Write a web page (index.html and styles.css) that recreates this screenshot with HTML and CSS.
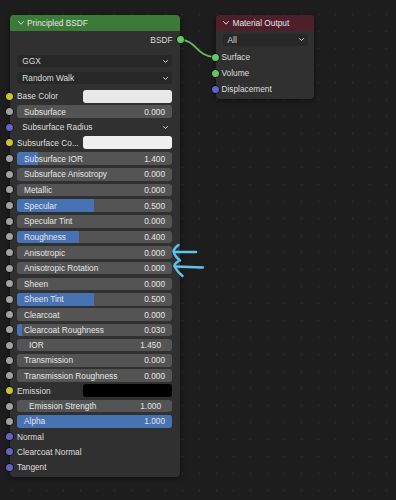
FILE: index.html
```html
<!DOCTYPE html>
<html lang="en">

<head>
  <meta charset="UTF-8" />
  <meta name="viewport" content="width=device-width, initial-scale=1" />
  <title>Node Editor</title>
  <link rel="stylesheet" href="styles.css">
</head>

<body>
  <div class="editor">
    <svg class="wires" width="396" height="500" viewBox="0 0 396 500">
      <path d="M179 39.5 C 197 39.5, 196 56.8, 214.3 56.8" />
    </svg>

    <!-- Principled BSDF -->
    <div class="node node-principled">
      <div class="node-header header-shader">
        <svg class="chevron" width="6" height="4" viewBox="0 0 6 4"><polyline points="0.5,0.5 3,3.2 5.5,0.5" /></svg>
        <span>Principled BSDF</span>
      </div>

      <div class="node-body">
        <div class="row row-output">
          <span class="label">BSDF</span>
          <span class="socket socket-out shader"></span>
        </div>

        <div class="top-menus">
          <div class="row row-menu">
            <div class="dropdown"><span>GGX</span><svg class="menu-arrow" width="5" height="3" viewBox="0 0 5 3"><polyline points="0.5,0.5 2.5,2.5 4.5,0.5" /></svg></div>
          </div>
          <div class="row row-menu">
            <div class="dropdown"><span>Random Walk</span><svg class="menu-arrow" width="5" height="3" viewBox="0 0 5 3"><polyline points="0.5,0.5 2.5,2.5 4.5,0.5" /></svg></div>
          </div>
        </div>

        <div class="group group-a">
          <div class="row">
            <span class="socket color"></span>
            <span class="label label-fixed">Base Color</span>
            <div class="swatch swatch-white"></div>
          </div>
          <div class="row">
            <span class="socket value"></span>
            <div class="field"><span>Subsurface</span><span>0.000</span></div>
          </div>
          <div class="row">
            <span class="socket vector"></span>
            <div class="dropdown plain"><span>Subsurface Radius</span><svg class="menu-arrow" width="5" height="3" viewBox="0 0 5 3"><polyline points="0.5,0.5 2.5,2.5 4.5,0.5" /></svg></div>
          </div>
          <div class="row">
            <span class="socket color"></span>
            <span class="label label-fixed">Subsurface Co...</span>
            <div class="swatch swatch-light"></div>
          </div>
          <div class="row">
            <span class="socket value"></span>
            <div class="field"><span class="fill" style="width: 13.7%"></span><span>Subsurface IOR</span><span>1.400</span></div>
          </div>
          <div class="row">
            <span class="socket value"></span>
            <div class="field"><span>Subsurface Anisotropy</span><span>0.000</span></div>
          </div>
          <div class="row">
            <span class="socket value"></span>
            <div class="field"><span>Metallic</span><span>0.000</span></div>
          </div>
          <div class="row">
            <span class="socket value"></span>
            <div class="field"><span class="fill" style="width: 49.5%"></span><span>Specular</span><span>0.500</span></div>
          </div>
          <div class="row">
            <span class="socket value"></span>
            <div class="field"><span>Specular Tint</span><span>0.000</span></div>
          </div>
          <div class="row">
            <span class="socket value"></span>
            <div class="field"><span class="fill" style="width: 40%"></span><span>Roughness</span><span>0.400</span></div>
          </div>
          <div class="row">
            <span class="socket value"></span>
            <div class="field"><span>Anisotropic</span><span>0.000</span></div>
          </div>
          <div class="row">
            <span class="socket value"></span>
            <div class="field"><span>Anisotropic Rotation</span><span>0.000</span></div>
          </div>
          <div class="row">
            <span class="socket value"></span>
            <div class="field"><span>Sheen</span><span>0.000</span></div>
          </div>
        </div>

        <div class="group group-b">
          <div class="row">
            <span class="socket value"></span>
            <div class="field"><span class="fill" style="width: 49.5%"></span><span>Sheen Tint</span><span>0.500</span></div>
          </div>
          <div class="row">
            <span class="socket value"></span>
            <div class="field"><span>Clearcoat</span><span>0.000</span></div>
          </div>
          <div class="row">
            <span class="socket value"></span>
            <div class="field"><span class="fill" style="width: 3%"></span><span>Clearcoat Roughness</span><span>0.030</span></div>
          </div>
          <div class="row">
            <span class="socket value"></span>
            <div class="field field-number"><span>IOR</span><span>1.450</span></div>
          </div>
          <div class="row">
            <span class="socket value"></span>
            <div class="field"><span>Transmission</span><span>0.000</span></div>
          </div>
          <div class="row">
            <span class="socket value"></span>
            <div class="field"><span>Transmission Roughness</span><span>0.000</span></div>
          </div>
          <div class="row">
            <span class="socket color"></span>
            <span class="label label-fixed">Emission</span>
            <div class="swatch swatch-black"></div>
          </div>
          <div class="row">
            <span class="socket value"></span>
            <div class="field field-number"><span>Emission Strength</span><span>1.000</span></div>
          </div>
          <div class="row">
            <span class="socket value"></span>
            <div class="field"><span class="fill" style="width: 100%"></span><span>Alpha</span><span>1.000</span></div>
          </div>
          <div class="row">
            <span class="socket vector"></span>
            <span class="label">Normal</span>
          </div>
          <div class="row">
            <span class="socket vector"></span>
            <span class="label">Clearcoat Normal</span>
          </div>
          <div class="row">
            <span class="socket vector"></span>
            <span class="label">Tangent</span>
          </div>
        </div>
      </div>
    </div>

    <!-- Material Output -->
    <div class="node node-output">
      <div class="node-header header-output">
        <svg class="chevron" width="6" height="4" viewBox="0 0 6 4"><polyline points="0.5,0.5 3,3.2 5.5,0.5" /></svg>
        <span>Material Output</span>
      </div>

      <div class="node-body output-body">
        <div class="output-menu">
          <div class="dropdown"><span>All</span><svg class="menu-arrow" width="5" height="3" viewBox="0 0 5 3"><polyline points="0.5,0.5 2.5,2.5 4.5,0.5" /></svg></div>
        </div>
        <div class="output-sockets">
          <div class="row row-input">
            <span class="socket shader"></span>
            <span class="label">Surface</span>
          </div>
          <div class="row row-input">
            <span class="socket shader"></span>
            <span class="label">Volume</span>
          </div>
          <div class="row row-input">
            <span class="socket vector"></span>
            <span class="label">Displacement</span>
          </div>
        </div>
      </div>
    </div>

    <!-- hand drawn arrows -->
    <svg class="marks" width="396" height="500" viewBox="0 0 396 500">
      <path d="M178.5 245 Q174 248.5 173.5 251.5 Q174.5 256 180 260.5" />
      <path d="M174.5 252 L196 252" />
      <path d="M178 261.5 Q174 264 174.5 266.5 Q177 271.5 182.5 276" />
      <path d="M175 266.5 L203 267.5" />
    </svg>
  </div>
</body>

</html>
```

FILE: styles.css
```css
* {
  box-sizing: border-box;
}

body {
  margin: 0;
  background: #1d1d1d;
  font-family: 'Liberation Sans', Arial, sans-serif;
  font-size: 8.3px;
  color: #dedede;
}

.editor {
  position: relative;
  width: 396px;
  height: 500px;
  overflow: hidden;
  background-color: #1d1d1d;
  background-image: radial-gradient(circle, #2a2a2a 0.8px, transparent 1.2px);
  background-size: 17px 17px;
  background-position: 4px 6px;
}

.wires,
.marks {
  position: absolute;
  left: 0;
  top: 0;
  pointer-events: none;
}

.wires path {
  fill: none;
  stroke: #62bd62;
  stroke-width: 1.8;
}

.marks {
  z-index: 5;
}

.marks path {
  fill: none;
  stroke: #5ec4ee;
  stroke-width: 2.4;
  stroke-linecap: round;
  stroke-linejoin: round;
}

/* nodes */

.node {
  position: absolute;
  background: #303030;
  border-radius: 4px;
  box-shadow: 0 1px 5px rgba(0, 0, 0, 0.55);
}

.node-principled {
  left: 10px;
  top: 15px;
  width: 169.5px;
}

.node-output {
  left: 215.5px;
  top: 15px;
  width: 98px;
}

.node-header {
  display: flex;
  align-items: center;
  gap: 3px;
  height: 16px;
  padding-left: 8px;
  border-radius: 4px 4px 0 0;
  color: #e4e4e4;
}

.header-shader {
  background: #3c7a38;
}

.header-output {
  height: 15.5px;
  padding-left: 7px;
  gap: 4px;
  background: #4d1f2b;
}

.chevron polyline,
.menu-arrow polyline {
  fill: none;
  stroke: #d8d8d8;
  stroke-width: 1;
  stroke-linecap: round;
  stroke-linejoin: round;
}

.node-body {
  padding-bottom: 2px;
}

/* rows */

.row {
  position: relative;
  display: flex;
  align-items: center;
  height: 15.5px;
  padding: 0 7.5px 0 7px;
}

.row-output {
  justify-content: flex-end;
  height: 17px;
  padding-right: 7px;
}

.top-menus {
  margin-top: 4.5px;
  margin-bottom: 1.7px;
}

.row-menu {
  height: 17px;
}

.group-a .row {
  height: 15.66px;
}

.group-b .row {
  height: 15.25px;
}

.label {
  white-space: nowrap;
}

.label-fixed {
  width: 66px;
  flex-shrink: 0;
}

/* sockets */

.socket {
  position: absolute;
  left: -4px;
  top: 50%;
  width: 7px;
  height: 7px;
  margin-top: -3.5px;
  border-radius: 50%;
  box-shadow: 0 0 0 0.8px rgba(0, 0, 0, 0.7);
}

.socket-out {
  left: auto;
  right: -4px;
}

.socket.value {
  background: #a1a1a1;
}

.socket.color {
  background: #c7c729;
}

.socket.vector {
  background: #6363c7;
}

.socket.shader {
  background: #63c763;
}

/* widgets */

.dropdown {
  flex: 1;
  display: flex;
  align-items: center;
  justify-content: space-between;
  height: 12px;
  padding: 0 4px 0 5.3px;
  background: #282828;
  border-radius: 3px;
}

.dropdown.plain {
  background: transparent;
}

.field {
  position: relative;
  flex: 1;
  display: flex;
  align-items: center;
  justify-content: space-between;
  height: 12.5px;
  padding: 0 7px;
  background: #545454;
  border-radius: 3px;
  overflow: hidden;
  color: #e6e6e6;
  white-space: nowrap;
}

.field span {
  position: relative;
}

.field .fill {
  position: absolute;
  left: 0;
  top: 0;
  bottom: 0;
  background: #4772b3;
}

.field-number {
  padding: 0 11px 0 12px;
}

.swatch {
  flex: 1;
  height: 13px;
  border-radius: 3px;
}

.swatch-white {
  background: #e9e9e9;
}

.swatch-light {
  background: #efefef;
}

.swatch-black {
  background: #000000;
}

/* material output */

.output-body {
  padding-top: 3px;
}

.output-menu {
  display: flex;
  padding: 0 5.5px 0 7px;
}

.output-menu .dropdown {
  padding-left: 5px;
}

.output-sockets {
  margin-top: 3.5px;
}

.row-input {
  height: 16px;
  padding-left: 6px;
}
```
